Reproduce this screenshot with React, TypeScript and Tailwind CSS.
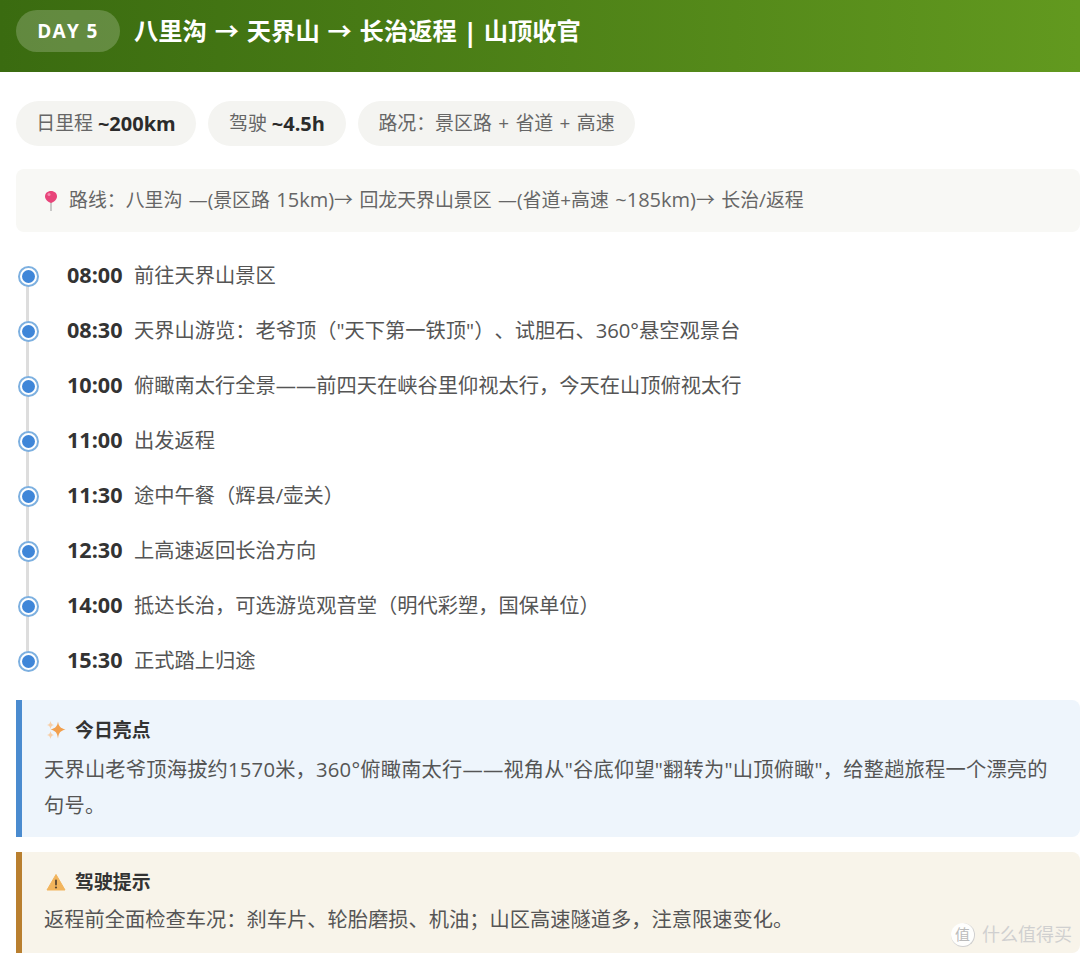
import React from 'react';

const fonts = '"Open Sans", "Noto Sans CJK SC", "Liberation Sans", sans-serif';

const schedule = [
  ['08:00', '前往天界山景区'],
  ['08:30', '天界山游览：老爷顶（"天下第一铁顶"）、试胆石、360°悬空观景台'],
  ['10:00', '俯瞰南太行全景——前四天在峡谷里仰视太行，今天在山顶俯视太行'],
  ['11:00', '出发返程'],
  ['11:30', '途中午餐（辉县/壶关）'],
  ['12:30', '上高速返回长治方向'],
  ['14:00', '抵达长治，可选游览观音堂（明代彩塑，国保单位）'],
  ['15:30', '正式踏上归途'],
];

const Pin = () => (
  <svg width="14" height="22" viewBox="0 0 14 22" className="shrink-0">
    <path d="M7 11v10" stroke="#a8a8a8" strokeWidth="1.2" />
    <path d="M7 1c3.500 0 6 2.400 6 5.400 0 3-2.800 5.200-6 6.600-3.200-1.400-6-3.600-6-6.600C1 3.400 3.500 1 7 1z" fill="#e8457a" />
    <circle cx="5" cy="4.500" r="1.500" fill="#f48bb0" />
  </svg>
);

const Sparkles = () => (
  <svg width="20" height="20" viewBox="0 0 20 20" className="shrink-0">
    <path d="M12 1.500c.8 5 2.200 6.600 7.500 8-5.300 1.400-6.700 3.200-7.500 9-.8-5.800-2.200-7.600-7.500-9 5.300-1.400 6.700-3 7.500-8z" fill="#f2a04e" />
    <path d="M4.500 1c.5 2.500 1.200 3.300 3.500 4-2.300.7-3 1.500-3.500 4-.5-2.500-1.200-3.300-3.500-4 2.300-.7 3-1.500 3.500-4z" fill="#f7cfa8" />
    <path d="M4.500 11c.5 2.500 1.200 3.300 3.500 4-2.300.7-3 1.500-3.500 4-.5-2.500-1.200-3.300-3.500-4 2.300-.7 3-1.500 3.500-4z" fill="#f7cfa8" />
  </svg>
);

const Warning = () => (
  <svg width="20" height="20" viewBox="0 0 20 20" className="shrink-0">
    <path d="M10 2.500 19 18H1z" fill="#f2b45c" stroke="#f2b45c" strokeLinejoin="round" />
    <rect x="9.100" y="7.500" width="1.800" height="6" rx=".9" fill="#5b4630" />
    <circle cx="10" cy="15.500" r="1.100" fill="#5b4630" />
  </svg>
);

export default function App() {
  return (
    <div
      className="w-[1080px] h-[957px] overflow-hidden bg-white relative [text-spacing-trim:space-all]"
      style={{ fontFamily: fonts }}
    >
      <div className="h-[72px] flex items-start pt-[10px] pl-4 gap-[14px] bg-gradient-to-r from-[#3a6b10] to-[#62991f]">
        <span className="h-[42px] w-[104px] rounded-full bg-white/20 flex items-center justify-center text-white font-bold text-[19px] tracking-[1.350px]">
          DAY 5
        </span>
        <h2 className="h-[42px] flex items-center text-white font-bold text-[24.300px] leading-none [word-spacing:1.500px]">
          八里沟 → 天界山 → 长治返程<span className="mx-[6px] text-[27px]">|</span>山顶收官
        </h2>
      </div>

      <div className="pl-4 pt-[29px]">
        <div className="flex gap-3 text-[18.900px] text-[#666666]">
          <span className="h-[45px] w-[180px] rounded-full bg-[#f4f4f1] flex items-center justify-center">
            日里程&nbsp;<b className="text-[#2b2b2b] font-bold text-[20px]">~200km</b>
          </span>
          <span className="h-[45px] w-[138px] rounded-full bg-[#f4f4f1] flex items-center justify-center">
            驾驶&nbsp;<b className="text-[#2b2b2b] font-bold text-[20px]">~4.5h</b>
          </span>
          <span className="h-[45px] w-[277px] rounded-full bg-[#f4f4f1] flex items-center justify-center [word-spacing:1.500px]">
            路况：景区路 + 省道 + 高速
          </span>
        </div>

        <div className="mt-[23px] h-[63px] pl-7 rounded-lg bg-[#f8f8f5] flex items-center gap-[11px] text-[18.900px] text-[#666666]">
          <Pin />
          <span className="mb-[2px] [word-spacing:1.500px]">
            路线：八里沟 —(景区路 <span className="text-[20px]">15km)</span>→ 回龙天界山景区 —(省道+高速{' '}
            <span className="text-[20px]">~185km)</span>→ 长治/返程
          </span>
        </div>

        <div className="mt-[17px] relative">
          <div className="absolute left-[10px] top-[28px] h-[385px] w-[3px] bg-[#dddddd]" />
          {schedule.map(([time, text]) => (
            <div key={time} className="relative h-[55px] flex items-center">
              <span className="w-[21px] h-[21px] ml-[2px] rounded-full bg-white border-2 border-[#7db0e0] flex items-center justify-center">
                <span className="w-[13px] h-[13px] shrink-0 rounded-full bg-[#3f86d8]" />
              </span>
              <span className="ml-[28px] mb-[2px] w-[67px] text-[21.600px] font-bold text-[#333333]">{time}</span>
              <span className="mb-[2px] text-[20.250px] text-[#555555]">{text}</span>
            </div>
          ))}
        </div>

        <div className="mt-[11px] h-[137px] border-l-[6px] border-[#4a8bcf] bg-[#eef5fc] rounded-r-lg pl-[22px] pr-6 pt-[15px]">
          <div className="flex items-center gap-[9px] h-[30px] ml-[2px] text-[18.900px] font-bold text-[#333333]">
            <Sparkles />
            今日亮点
          </div>
          <p className="mt-[6px] text-[20.250px] leading-[36px] tracking-[0.2px] text-[#555555]">
            天界山老爷顶海拔约1570米，360°俯瞰南太行——视角从"谷底仰望"翻转为"山顶俯瞰"，给整趟旅程一个漂亮的句号。
          </p>
        </div>

        <div className="mt-[15px] h-[101px] border-l-[6px] border-[#b97f2f] bg-[#f8f4ea] rounded-r-lg pl-[22px] pr-6 pt-[15px]">
          <div className="flex items-center gap-[9px] h-[30px] ml-[2px] text-[18.900px] font-bold text-[#333333]">
            <Warning />
            驾驶提示
          </div>
          <p className="mt-[4px] text-[20.250px] leading-[36px] text-[#555555]">
            返程前全面检查车况：刹车片、轮胎磨损、机油；山区高速隧道多，注意限速变化。
          </p>
        </div>
      </div>

      <div className="absolute left-[951px] top-[921px] flex items-center gap-[7px]">
        <span className="w-[24px] h-[24px] rounded-full bg-white/90 border-r border-b border-[#cfcfcf] flex items-center justify-center text-[15px] text-[#bbbbbb]">
          值
        </span>
        <span className="text-[18px] text-[#d0d0d0]">什么值得买</span>
      </div>
    </div>
  );
}
